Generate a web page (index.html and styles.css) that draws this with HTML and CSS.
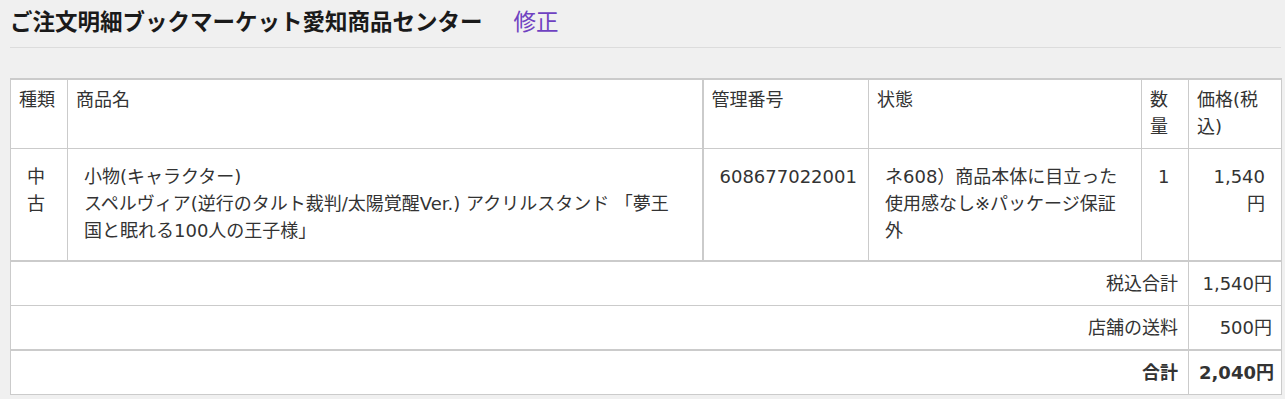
FILE: index.html
```html
<!DOCTYPE html>
<html lang="ja">
<head>
<meta charset="utf-8">
<title>ご注文明細</title>
<link rel="stylesheet" href="styles.css">
</head>
<body>
<div class="page">
  <h1 class="title">ご注文明細ブックマーケット愛知商品センター<a class="edit" href="#">修正</a></h1>
  <hr class="divider">
  <table class="order">
    <colgroup>
      <col class="c-type">
      <col class="c-name">
      <col class="c-code">
      <col class="c-state">
      <col class="c-qty">
      <col class="c-price">
    </colgroup>
    <thead>
      <tr>
        <th>種類</th>
        <th class="sep">商品名</th>
        <th>管理番号</th>
        <th>状態</th>
        <th>数量</th>
        <th>価格(税込)</th>
      </tr>
    </thead>
    <tbody class="items">
      <tr>
        <td>中古</td>
        <td class="sep">小物(キャラクター)<br>スペルヴィア(逆行のタルト裁判/太陽覚醒Ver.) アクリルスタンド 「夢王<br>国と眠れる100人の王子様」</td>
        <td>608677022001</td>
        <td>ネ608）商品本体に目立った使用感なし※パッケージ保証外</td>
        <td>1</td>
        <td class="price">1,540円</td>
      </tr>
    </tbody>
    <tbody class="totals">
      <tr>
        <td colspan="5" class="label">税込合計</td>
        <td class="value">1,540円</td>
      </tr>
      <tr class="shipping">
        <td colspan="5" class="label">店舗の送料</td>
        <td class="value">500円</td>
      </tr>
      <tr class="grand">
        <td colspan="5" class="label">合計</td>
        <td class="value">2,040円</td>
      </tr>
    </tbody>
  </table>
</div>
</body>
</html>
```

FILE: styles.css
```css
html, body {
  margin: 0;
  padding: 0;
  background: #f0f0f0;
}

body {
  font-family: "Noto Sans CJK JP", "Noto Sans", sans-serif;
  color: #333;
}

.page {
  width: 1271px;
  margin-left: 10px;
}

.title {
  margin: 0;
  padding-top: 5px;
  font-size: 22.5px;
  line-height: 30px;
  font-weight: bold;
  color: #1a1a1a;
}

.edit {
  margin-left: 31px;
  font-weight: normal;
  color: #6f42c1;
  text-decoration: none;
}

.divider {
  margin: 12px 0 0;
  border: 0;
  border-top: 1px solid #dcdcdc;
  height: 0;
}

.order {
  margin-top: 30px;
  width: 1271px;
  table-layout: fixed;
  border-collapse: collapse;
  background: #fff;
  font-family: "DejaVu Sans", "Noto Sans CJK JP", sans-serif;
  font-size: 18px;
  line-height: 27px;
  border: 1px solid #cbcbcb;
  border-top: 2px solid #cbcbcb;
}

.c-type { width: 57px; }
.c-name { width: 635px; }
.c-code { width: 166px; }
.c-state { width: 273px; }
.c-qty { width: 47px; }
.c-price { width: 93px; }

.order th,
.order td {
  border: 1px solid #cbcbcb;
  text-align: left;
  vertical-align: top;
}

.order th {
  font-weight: normal;
  padding: 6px 8px 8px;
}

.order .sep {
  border-right: 2px solid #cbcbcb;
}

.items td {
  padding: 14px 16px 16px;
  border-bottom: 2px solid #cbcbcb;
}

.items .price {
  text-align: right;
}

.totals td {
  padding: 8px 9px 8px 10px;
  vertical-align: middle;
}

.totals .label {
  text-align: right;
  padding-right: 10px;
}

.totals .value {
  text-align: right;
  white-space: nowrap;
}

.totals .shipping td {
  border-bottom: 2px solid #cbcbcb;
}

.totals .grand td {
  font-weight: bold;
}
```
